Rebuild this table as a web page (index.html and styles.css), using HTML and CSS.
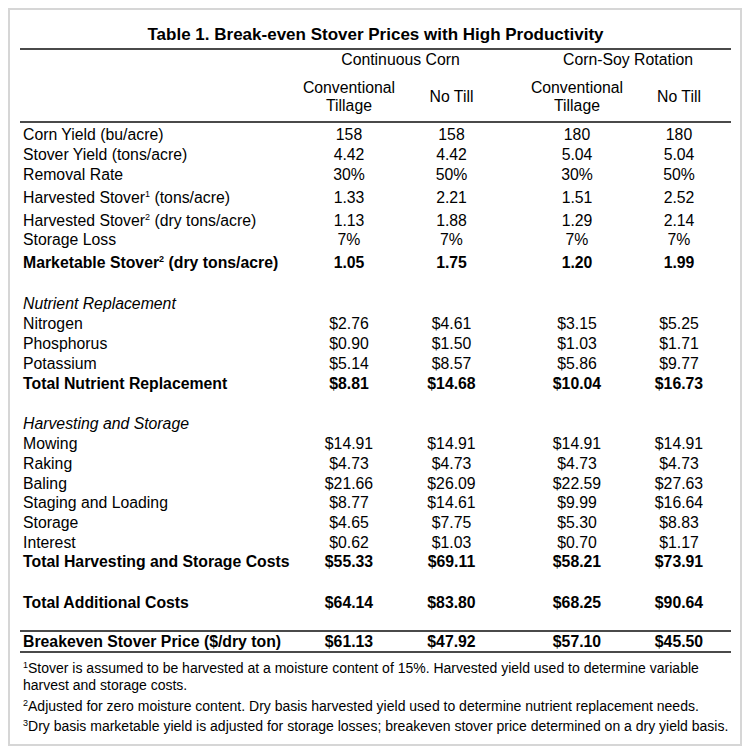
FILE: index.html
```html
<!DOCTYPE html>
<html>
<head>
<meta charset="utf-8">
<link rel="stylesheet" href="styles.css">
</head>
<body>
<div class="frame">
  <div class="title">Table 1. Break-even Stover Prices with High Productivity</div>
  <div class="rule"></div>
  <div class="row head1">
    <div></div>
    <div class="span2">Continuous Corn</div>
    <div></div>
    <div class="span2">Corn-Soy Rotation</div>
  </div>
  <div class="row head2">
    <div></div>
    <div class="c">Conventional<br>Tillage</div>
    <div class="c">No Till</div>
    <div></div>
    <div class="c">Conventional<br>Tillage</div>
    <div class="c">No Till</div>
  </div>
  <div class="rule"></div>

  <div class="row h20"><div class="l">Corn Yield (bu/acre)</div><div class="c">158</div><div class="c">158</div><div></div><div class="c">180</div><div class="c">180</div></div>
  <div class="row h20"><div class="l">Stover Yield (tons/acre)</div><div class="c">4.42</div><div class="c">4.42</div><div></div><div class="c">5.04</div><div class="c">5.04</div></div>
  <div class="row h20"><div class="l">Removal Rate</div><div class="c">30%</div><div class="c">50%</div><div></div><div class="c">30%</div><div class="c">50%</div></div>
  <div class="row h23"><div class="l">Harvested Stover<sup>1</sup> (tons/acre)</div><div class="c">1.33</div><div class="c">2.21</div><div></div><div class="c">1.51</div><div class="c">2.52</div></div>
  <div class="row h23"><div class="l">Harvested Stover<sup>2</sup> (dry tons/acre)</div><div class="c">1.13</div><div class="c">1.88</div><div></div><div class="c">1.29</div><div class="c">2.14</div></div>
  <div class="row h19"><div class="l">Storage Loss</div><div class="c">7%</div><div class="c">7%</div><div></div><div class="c">7%</div><div class="c">7%</div></div>
  <div class="row h23 b"><div class="l">Marketable Stover<sup>2</sup> (dry tons/acre)</div><div class="c">1.05</div><div class="c">1.75</div><div></div><div class="c">1.20</div><div class="c">1.99</div></div>

  <div class="row h41"><div class="l i">Nutrient Replacement</div></div>
  <div class="row h20"><div class="l">Nitrogen</div><div class="c">$2.76</div><div class="c">$4.61</div><div></div><div class="c">$3.15</div><div class="c">$5.25</div></div>
  <div class="row h20"><div class="l">Phosphorus</div><div class="c">$0.90</div><div class="c">$1.50</div><div></div><div class="c">$1.03</div><div class="c">$1.71</div></div>
  <div class="row h20"><div class="l">Potassium</div><div class="c">$5.14</div><div class="c">$8.57</div><div></div><div class="c">$5.86</div><div class="c">$9.77</div></div>
  <div class="row h20 b"><div class="l">Total Nutrient Replacement</div><div class="c">$8.81</div><div class="c">$14.68</div><div></div><div class="c">$10.04</div><div class="c">$16.73</div></div>

  <div class="row h40"><div class="l i">Harvesting and Storage</div></div>
  <div class="row h20"><div class="l">Mowing</div><div class="c">$14.91</div><div class="c">$14.91</div><div></div><div class="c">$14.91</div><div class="c">$14.91</div></div>
  <div class="row h20"><div class="l">Raking</div><div class="c">$4.73</div><div class="c">$4.73</div><div></div><div class="c">$4.73</div><div class="c">$4.73</div></div>
  <div class="row h20"><div class="l">Baling</div><div class="c">$21.66</div><div class="c">$26.09</div><div></div><div class="c">$22.59</div><div class="c">$27.63</div></div>
  <div class="row h19"><div class="l">Staging and Loading</div><div class="c">$8.77</div><div class="c">$14.61</div><div></div><div class="c">$9.99</div><div class="c">$16.64</div></div>
  <div class="row h20"><div class="l">Storage</div><div class="c">$4.65</div><div class="c">$7.75</div><div></div><div class="c">$5.30</div><div class="c">$8.83</div></div>
  <div class="row h20"><div class="l">Interest</div><div class="c">$0.62</div><div class="c">$1.03</div><div></div><div class="c">$0.70</div><div class="c">$1.17</div></div>
  <div class="row h19 b"><div class="l">Total Harvesting and Storage Costs</div><div class="c">$55.33</div><div class="c">$69.11</div><div></div><div class="c">$58.21</div><div class="c">$73.91</div></div>

  <div class="row h41 b"><div class="l">Total Additional Costs</div><div class="c">$64.14</div><div class="c">$83.80</div><div></div><div class="c">$68.25</div><div class="c">$90.64</div></div>

  <div class="gap"></div>
  <div class="rule"></div>
  <div class="row total b"><div class="l">Breakeven Stover Price ($/dry ton)</div><div class="c">$61.13</div><div class="c">$47.92</div><div></div><div class="c">$57.10</div><div class="c">$45.50</div></div>
  <div class="rule"></div>

  <div class="notes">
    <p class="n1"><sup>1</sup>Stover is assumed to be harvested at a moisture content of 15%. Harvested yield used to determine variable harvest and storage costs.</p>
    <p class="n2"><sup>2</sup>Adjusted for zero moisture content. Dry basis harvested yield used to determine nutrient replacement needs.</p>
    <p class="n3"><sup>3</sup>Dry basis marketable yield is adjusted for storage losses; breakeven stover price determined on a dry yield basis.</p>
  </div>
</div>
</body>
</html>
```
FILE: styles.css
```css
html, body {
  margin: 0;
  padding: 0;
  background: #ffffff;
}
body {
  padding: 8px 0 0 8px;
  font-family: "Liberation Sans", Arial, sans-serif;
  color: #000;
  font-size: 15.8px;
}
.frame {
  box-sizing: border-box;
  width: 734px;
  height: 738px;
  border: 2px solid #d6d6d6;
  padding: 0 9px 0 10px;
  display: flex;
  flex-direction: column;
}
.title {
  height: 38px;
  line-height: 20px;
  padding-top: 15px;
  box-sizing: border-box;
  text-align: center;
  font-weight: bold;
  font-size: 17px;
}
.rule {
  height: 2px;
  background: #4a4a4a;
  flex: none;
}
.row {
  display: grid;
  grid-template-columns: 278px 102px 103px 23px 102px 102px;
  align-items: end;
  line-height: 16px;
  padding-bottom: 0;
  box-sizing: border-box;
  flex: none;
}
.row > div { white-space: nowrap; }
.head1 { height: 20px; align-items: center; padding: 0; }
.head1 .span2 { grid-column: span 2; text-align: center; }
.head2 { height: 51px; align-items: center; padding: 0; line-height: 18px; }
.head2 > div { padding-top: 3px; }
.h19 { height: 19px; }
.h20 { height: 20px; }
.h23 { height: 23px; }
.h40 { height: 40px; }
.h41 { height: 41px; }
.total { height: 19px; align-items: center; padding: 0; }
.gap { height: 19px; flex: none; }
.l { padding-left: 3px; }
.c { text-align: center; }
.b { font-weight: bold; }
.i { font-style: italic; }
sup {
  font-size: 9px;
  line-height: 0;
  vertical-align: 6px;
}
.notes {
  padding-left: 3px;
  line-height: 17px;
  font-size: 14px;
}
.notes p { margin: 0; }
.notes .n1 { margin-top: 7px; }
.notes .n2 { margin-top: 4px; }
.notes .n3 { margin-top: 3px; }
.notes sup { vertical-align: 5px; font-size: 9px; }
```
